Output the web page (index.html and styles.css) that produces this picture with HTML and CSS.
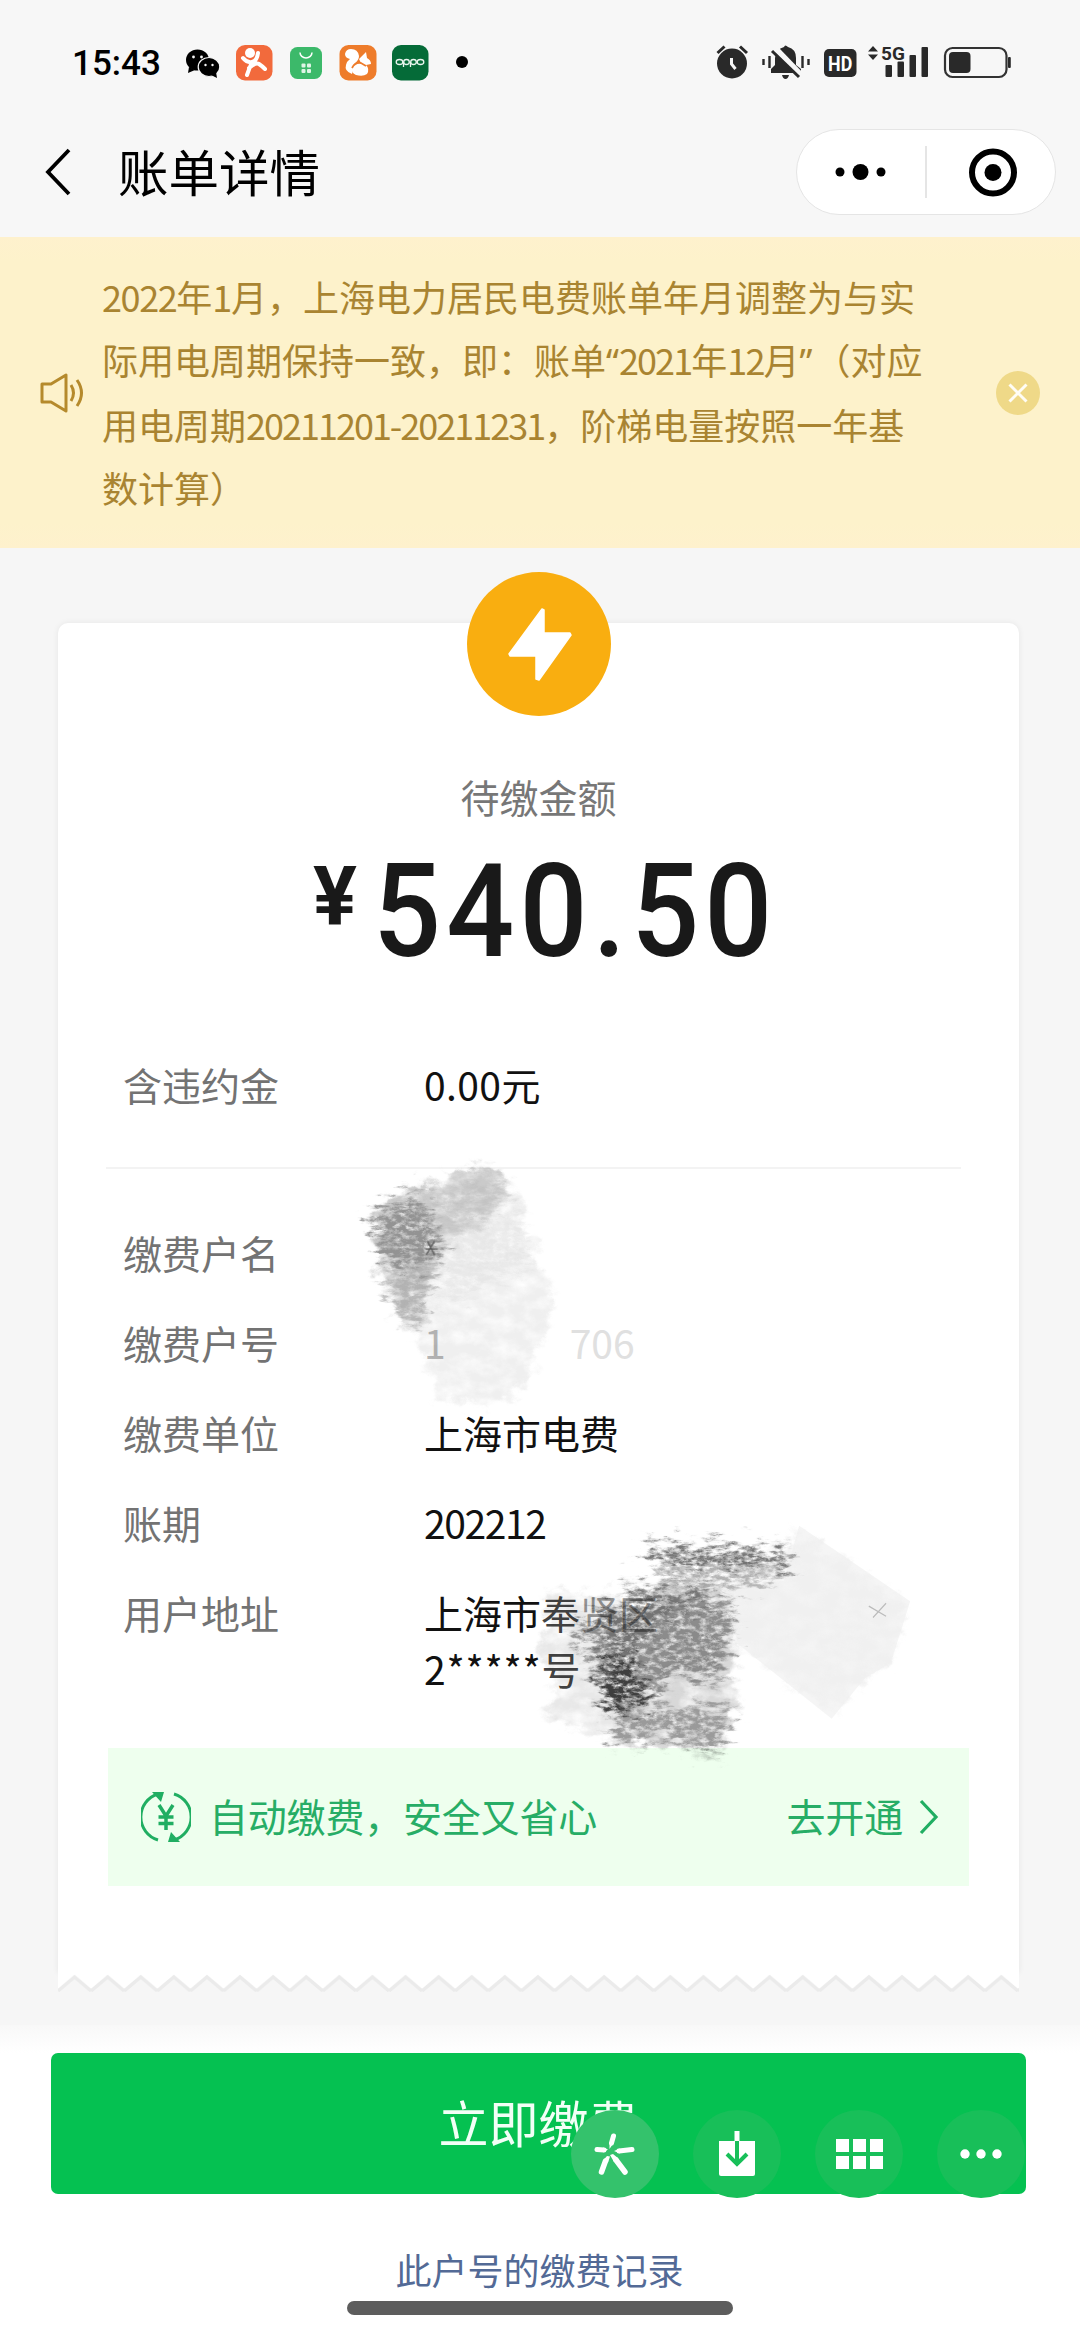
FILE: index.html
```html
<!DOCTYPE html>
<html lang="zh-CN">
<head>
<meta charset="utf-8">
<title>账单详情</title>
<link rel="stylesheet" href="styles.css">
</head>
<body>
<div class="screen">
  <header class="status">
    <span class="clock">15:43</span>
    <svg class="apps" width="300" height="40" viewBox="180 42 300 40">
      <ellipse cx="197.500" cy="60" rx="11.500" ry="10.500"/><path d="M189 67l-1 6 7-3z"/>
      <g stroke="#f7f7f7" stroke-width="1.200"><ellipse cx="209" cy="67" rx="10.800" ry="9.500"/></g><path d="M211 75l6 3-1-6z"/>
      <g fill="#f7f7f7"><circle cx="193.500" cy="57" r="1.400"/><circle cx="201.500" cy="57" r="1.400"/><circle cx="205.500" cy="65" r="1.200"/><circle cx="212.500" cy="65" r="1.200"/></g>
      <rect x="236" y="45" width="36.500" height="35.500" rx="9" fill="#f26a3c"/>
      <circle cx="250" cy="53" r="5" fill="#fff"/>
      <path d="M243 58q4 5 9 4t6-9M252 62q-3 7-5 13M249 68q7-6 10-4t6 5" fill="none" stroke="#fff" stroke-width="4" stroke-linecap="round"/>
      <rect x="290" y="47" width="32" height="32" rx="7.500" fill="#3cb96a"/>
      <path d="M300 52.500a6 5.500 0 0 0 12 0" fill="none" stroke="#fff" stroke-width="1.500"/>
      <g fill="#dff5e6"><rect x="301.500" y="63.500" width="4" height="4" rx="1"/><rect x="307" y="63.500" width="4" height="4" rx="1"/><rect x="301.500" y="69" width="4" height="4" rx="1"/><rect x="307" y="69" width="4" height="4" rx="1"/></g>
      <rect x="339.500" y="45" width="37" height="35.500" rx="9" fill="#ee7c2b"/>
      <path d="M352 74q-8-3-6-9 1-4 4-6-5-1-5-5 1-5 6-5 7 0 8 7 0 4-4 7t-2 7z" fill="#fff"/>
      <path d="M359 59l7-7 1 6q4 2 4 6l-5 1q4 4 1 9-4 3-11 1-5-2-4-7 2-6 9-5z" fill="#fff"/>
      <path d="M352 68q3-6 9-5l5 3" fill="none" stroke="#ee7c2b" stroke-width="1.800"/>
      <rect x="392" y="45" width="36.500" height="35.500" rx="9" fill="#056b38"/>
      <g fill="none" stroke="#eaf5ee" stroke-width="1.300"><ellipse cx="399.500" cy="62" rx="3.300" ry="2.500"/><ellipse cx="406.500" cy="62" rx="2.800" ry="2.500"/><ellipse cx="413.500" cy="62" rx="2.800" ry="2.500"/><ellipse cx="420.500" cy="62" rx="3.300" ry="2.500"/><path d="M403.500 62v5M410.500 62v5"/></g>
      <circle cx="462" cy="62" r="6"/>
    </svg>
    <svg class="signals" width="300" height="40" viewBox="714 42 300 40" fill="#292929">
      <circle cx="732" cy="63.500" r="15"/><path d="M717.500 53l7-6.500M747 53l-7-6.500" stroke="#292929" stroke-width="3"/>
      <path d="M731.500 58v6l4 5" fill="none" stroke="#f7f7f7" stroke-width="3"/>
      <path d="M771 73v-4l4-4v-7q1-9 9-11 1-3 4 0 8 2 8 11v7l5 4v4zM782 75h7q-1 4-3.500 4t-3.500-4"/>
      <path d="M763.500 59v6M769.500 56v12M802.500 56v12M808.500 59v6" stroke="#292929" stroke-width="2.400"/>
      <path d="M774 47l27 28" stroke="#f7f7f7" stroke-width="6"/><path d="M772 51l27 26" stroke="#292929" stroke-width="3"/>
      <rect x="824" y="49" width="32.500" height="28" rx="5"/>
      <text x="0" y="0" transform="translate(840.200 70.500) scale(.85 1)" text-anchor="middle" class="tiny-hd" fill="#fff">HD</text>
      <path d="M868 51.500l5-5.500 5 5.500zM868 54.500h10l-5 5.500z"/>
      <text x="881" y="60" class="tiny-5g">5G</text>
      <rect x="885.500" y="65" width="6.500" height="12" rx="1"/><rect x="897.500" y="61.500" width="6.500" height="15.500" rx="1"/><rect x="909.500" y="55" width="6.500" height="22" rx="1"/><rect x="921.500" y="47" width="6.500" height="30" rx="1"/>
      <rect x="945" y="48" width="61.500" height="29" rx="7.500" fill="none" stroke="#333" stroke-width="2.200"/><rect x="949" y="52" width="21.500" height="21" rx="4"/><rect x="1008" y="57" width="2.800" height="11" rx="1"/>
    </svg>
  </header>

  <nav class="nav">
    <svg width="28" height="50" viewBox="0 0 28 50"><path d="M25 3L4 25l21 22" fill="none" stroke="#000" stroke-width="3.800"/></svg>
    <h1 class="title">账单详情</h1>
    <div class="capsule">
      <svg width="257" height="84" viewBox="0 0 257 84"><circle cx="43" cy="42" r="4.500"/><circle cx="63.500" cy="42" r="8"/><circle cx="84" cy="42" r="4.500"/><path d="M129 16v52" stroke="#ddd" stroke-width="1.500"/><circle cx="196" cy="42.500" r="21" fill="none" stroke="#000" stroke-width="6"/><circle cx="196" cy="42.500" r="8.500"/></svg>
    </div>
  </nav>

  <section class="notice">
    <svg class="speaker" width="46" height="42" viewBox="0 0 46 42" fill="none" stroke="#b58a2c" stroke-width="3"><path d="M3 12h9L27 3v36L12 30H3z" stroke-linejoin="round"/><path d="M32 13q5 8 0 16M38 8q9 13 0 26"/></svg>
    <p class="notice-text"><span class="l1"><i>2022</i>年<i>1</i>月，上海电力居民电费账单年月调整为与实</span><span class="l2">际用电周期保持一致，即：账单<b>“</b><i>2021</i>年<i>12</i>月<b class="end">”</b>（对应</span><span class="l3">用电周期<i>20211201-20211231</i>，阶梯电量按照一年基</span><span>数计算）</span></p>
    <svg class="close" width="44" height="44" viewBox="0 0 44 44"><circle cx="22" cy="22" r="22" fill="#efd988"/><path d="M13.500 13.500l17 17M30.500 13.500l-17 17" stroke="#fffdf5" stroke-width="3"/></svg>
  </section>

  <main class="main">
    <article class="bill">
      <svg class="bolt" width="144" height="144" viewBox="0 0 144 144"><circle cx="72" cy="72" r="72" fill="#f9ae10"/><path d="M75 37l2 1V61h26l1 2-32 45-3-1V84H43l-1-2z" fill="#fff" stroke="#fff" stroke-width="1.500" stroke-linejoin="round"/></svg>
      <p class="due">待缴金额</p>
      <p class="amount"><span class="yen">¥</span><span class="figure">540.50</span></p>
      <dl class="row fee"><dt>含违约金</dt><dd>0.00元</dd></dl>
      <hr class="rule">
      <div class="rows">
        <dl class="row"><dt>缴费户名</dt><dd></dd></dl>
        <dl class="row"><dt>缴费户号</dt><dd class="faint"><span class="first">1</span><span>706</span></dd></dl>
        <dl class="row"><dt>缴费单位</dt><dd>上海市电费</dd></dl>
        <dl class="row"><dt>账期</dt><dd class="tight">202212</dd></dl>
        <dl class="row"><dt>用户地址</dt><dd>上海市<span class="fade1">奉</span><span class="fade2">贤区</span><br><span class="stars">2*****</span><span class="fade1">号</span></dd></dl>
      </div>
      <div class="auto">
        <svg width="50" height="54" viewBox="0 0 50 54" fill="none" stroke="#20ae62" stroke-width="3"><path d="M17 50A24 24 0 0 1 17 4M33 4a24 24 0 0 1 0 46"/><path d="M11 2h12l-3 10zM39 52H27l3-10z" fill="#20ae62" stroke="none"/><path d="M18 15l7 11 7-11M25 26v14M17.500 27h15M17.500 33.500h15" stroke-width="3.500"/></svg>
        <span class="auto-text">自动缴费，安全又省心</span>
        <span class="auto-link">去开通</span>
        <svg class="go" width="20" height="36" viewBox="0 0 20 36"><path d="M2 2l15 16L2 34" fill="none" stroke="#20ae62" stroke-width="3.200"/></svg>
      </div>
      <svg class="scribble" width="600" height="640" viewBox="0 0 1568 1568" preserveAspectRatio="none">
        <defs>
          <filter id="wash" x="-10%" y="-10%" width="120%" height="120%" color-interpolation-filters="sRGB">
            <feGaussianBlur in="SourceGraphic" stdDeviation="7" result="s"/>
            <feTurbulence type="fractalNoise" baseFrequency=".02 .03" numOctaves="5" seed="4" result="n"/>
            <feDisplacementMap in="s" in2="n" scale="80" xChannelSelector="R" yChannelSelector="G" result="d"/>
            <feColorMatrix in="n" type="matrix" values="0 0 0 0 0 0 0 0 0 0 0 0 0 0 0 0 0 1.600 0 -.02" result="m"/>
            <feComposite in="d" in2="m" operator="in"/>
          </filter>
          <filter id="chalk" x="-10%" y="-15%" width="120%" height="130%" color-interpolation-filters="sRGB">
            <feGaussianBlur in="SourceGraphic" stdDeviation="10" result="s"/>
            <feTurbulence type="fractalNoise" baseFrequency=".022 .07" numOctaves="5" seed="9" result="n"/>
            <feDisplacementMap in="s" in2="n" scale="120" xChannelSelector="R" yChannelSelector="G" result="d"/>
            <feTurbulence type="fractalNoise" baseFrequency=".05 .09" numOctaves="5" seed="21" result="g"/>
            <feColorMatrix in="g" type="matrix" values="0 0 0 0 0 0 0 0 0 0 0 0 0 0 0 0 2.600 0 0 -.5" result="m"/>
            <feComposite in="d" in2="m" operator="in"/>
          </filter>
        </defs>
        <g filter="url(#wash)">
          <path d="M85 190L350 65 440 95 460 160 530 330 560 390 500 560 440 650 250 640 235 540 190 480 110 340z" fill="#efefef"/>
          <path d="M85 190L190 120 350 65 435 95 430 160 300 250 240 340 200 460 170 450 110 350z" fill="#cacaca"/>
        </g>
        <g filter="url(#chalk)">
          <path d="M80 195L190 130 230 170 270 280 210 310 125 320z" fill="#939393"/>
          <path d="M120 340L250 300 200 450 170 440z" fill="#aaa" opacity=".75"/>
          <path d="M220 160L420 85 430 150 300 220z" fill="#bbb" opacity=".5"/>
          <path d="M280 230L460 160 490 300 400 350 270 400z" fill="#ddd" opacity=".45"/>
        </g>
        <path d="M229 248l18 34M247 248l-22 34M224 267h32" stroke="#555" stroke-width="3"/>
        <g filter="url(#wash)">
          <path d="M540 1110L740 1110 800 1480 640 1450 530 1410 570 1370 535 1260z" fill="#e8e8e8"/>
          <path d="M820 1100L1040 1080 1030 1330 1040 1390 990 1500 720 1470z" fill="#d8d8d8"/>
          <path d="M1200 965L1480 1135 1440 1280 1370 1320 1290 1405 1040 1235 990 1100z" fill="#f1f1f1"/>
        </g>
        <path d="M1200 945L1490 1130 1440 1280 1370 1320 1285 1418 1040 1235 1000 1100 1160 1080z" fill="#f0f0f0" opacity=".65"/>
        <g filter="url(#chalk)">
          <path d="M800 988L860 996 1165 1006 1170 1042 1010 1048 815 1032z" fill="#707070"/>
          <path d="M830 1050L1150 1060 1140 1082 940 1086 850 1088z" fill="#909090" opacity=".8"/>
          <path d="M745 1085L800 1105 950 1100 1020 1140 1020 1190 1000 1320 860 1310 800 1370 700 1390 660 1300 645 1230 600 1195 690 1155 760 1130z" fill="#8c8c8c"/>
          <path d="M700 1160L820 1125 950 1110 945 1140 840 1160 780 1250 720 1260z" fill="#606060" opacity=".6"/>
          <path d="M685 1270L760 1260 800 1370 730 1415 685 1380z" fill="#3e3e3e"/>
          <path d="M720 1400L1030 1390 985 1500 850 1460 710 1475z" fill="#9a9a9a"/>
          <path d="M870 1190L1000 1220 980 1310 850 1300z" fill="#888" opacity=".5"/>
        </g>
        <path d="M1382 1142l45 25M1427 1135l-34 35" stroke="#bbb" stroke-width="3"/>
      </svg>
      <svg class="teeth" width="961" height="26" viewBox="0 0 961 26"><defs><pattern id="tooth" width="33.100" height="26" patternUnits="userSpaceOnUse"><path d="M0 0V18L16.550 4 33.100 18V0z" fill="#fff"/><path d="M0 20L16.550 6 33.100 20" fill="none" stroke="#ebebeb" stroke-width="3.500"/></pattern></defs><rect width="961" height="26" fill="url(#tooth)"/></svg>
    </article>
  </main>

  <footer class="foot">
    <div class="pay"><span>立即缴费</span>
      <div class="tools">
        <svg class="strong" width="88" height="88" viewBox="0 0 88 88"><g fill="none" stroke="#fff" stroke-linecap="round"><path d="M42.500 26l-2 7" stroke-width="5"/><path d="M26 39.500l7 .5" stroke-width="5"/><path d="M48 41l13-1.500" stroke-width="5"/><path d="M45 50l9 12" stroke-width="5.500"/><path d="M34.500 51l-4 11" stroke-width="5.500"/></g><path d="M38.500 32l4 1-4 6zM32 37.500l5 2-5 3zM43 41l6-2.500v5zM39 45l3-1 5.500 4.500-4.500 3.500zM36 46l3 .5-2 6-5-2z" fill="#fff"/></svg>
        <svg width="88" height="88" viewBox="0 0 88 88"><path d="M26 31h36v33q0 2-2 2H28q-2 0-2-2z" fill="#fff"/><path d="M44 21v10" stroke="#fff" stroke-width="5"/><path d="M44 31v23M34 44l10 10 10-10" fill="none" stroke="#18bf59" stroke-width="4"/></svg>
        <svg width="88" height="88" viewBox="0 0 88 88"><path d="M21 29h13v13H21zM38 29h13v13H38zM55 29h13v13H55zM21 46h13v13H21zM38 46h13v13H38zM55 46h13v13H55z" fill="#fff"/></svg>
        <svg width="88" height="88" viewBox="0 0 88 88" fill="#fff"><circle cx="28" cy="44" r="4.700"/><circle cx="44" cy="44" r="4.700"/><circle cx="60" cy="44" r="4.700"/></svg>
      </div>
    </div>
    <a class="history">此户号的缴费记录</a>
    <div class="home"></div>
  </footer>
</div>
</body>
</html>
```
FILE: styles.css
```css
* { box-sizing: border-box; margin: 0; padding: 0; }
body { background: #f6f6f6; font-family: "Noto Sans CJK SC", sans-serif; color: #111; }
i { font-style: normal; }
b { font-weight: 400; font-family: "Noto Sans", sans-serif; }
svg { display: block; flex: none; }
.screen { width: 1080px; height: 2337px; display: flex; flex-direction: column; background: #f6f6f6; overflow: hidden; }

.status { height: 112px; padding: 43px 66px 0 72px; display: flex; align-items: flex-start; background: #f7f7f7; }
.clock { width: 108px; font: 500 35px/41px Roboto, sans-serif; color: #000; white-space: nowrap; }
.apps, .signals { margin-top: -1px; }
.signals { margin-left: auto; }
.tiny-hd { font: 700 21px Roboto, sans-serif; }
.tiny-5g { font: 700 19px Roboto, sans-serif; }

.nav { height: 125px; padding: 0 24px 6px 44px; display: flex; align-items: center; background: #f7f7f7; }
.title { margin: -3px 0 0 46px; font-size: 50.5px; font-weight: 400; line-height: 60px; color: #000; }
.capsule { margin-left: auto; width: 260px; height: 86px; border: 1.5px solid #e5e5e5; border-radius: 43px; background: #fff; }

.notice { height: 311px; padding: 28px 39px 0 39px; display: flex; background: linear-gradient(#fef1cd, #fdf2cb 8%, #fdf2cb 92%, #fef1cd); color: #a98431; }
.speaker { margin-top: 107px; }
.notice-text { margin-left: 17px; width: 840px; font-size: 36px; line-height: 62.7px; }
.notice-text span { display: block; white-space: nowrap; }
.l1 i { letter-spacing: -1.4px; }
.l2 i { letter-spacing: -1.9px; }
.l2 .end { margin-right: 20px; }
.l3 i { letter-spacing: -2px; }
.close { margin-left: 54px; margin-top: 106px; }

.main { height: 1477px; padding: 75px 61px 0 58px; background: #f6f6f6; }
.bill { position: relative; height: 1350px; padding-top: 146px; border-radius: 10px 10px 0 0; background: #fff; box-shadow: 0 0 6px rgba(0, 0, 0, .07); }
.bolt { position: absolute; left: 409px; top: -51px; }
.due { height: 54px; text-align: center; font-size: 39px; line-height: 54px; color: #777; }
.amount { height: 187px; padding: 13px 0 0 255px; display: flex; font: 500 130px/152px Roboto, sans-serif; color: #191919; }
.figure { letter-spacing: 5.7px; transform: scaleX(.92); transform-origin: left; }
.yen { margin-right: 16px; margin-top: 3px; font-size: 82px; font-weight: 700; line-height: 114px; }
.row { display: flex; padding-left: 65px; font-size: 39px; line-height: 56px; }
.row dt { width: 301px; color: #737373; }
.fee { margin-top: 46px; }
.fee dd { letter-spacing: .4px; }
.rule { margin: 55px 58px 0 48px; border: 0; border-top: 2px solid #f3f3f3; }
.rows { margin-top: 55px; height: 524px; display: flex; flex-direction: column; gap: 34px; }
.tight { letter-spacing: -1.4px; }
.stars { letter-spacing: .8px; }
.faint { display: flex; gap: 124px; color: #e0e0e0; }
.faint .first { color: #bbb; }
.fade1 { color: #444; }
.fade2 { color: #999; }
.auto { margin: 0 50px; height: 138px; padding: 0 30px 0 33px; display: flex; align-items: center; background: #eeffee; color: #27ad66; font-size: 39px; letter-spacing: -.2px; }
.auto-text { margin: -5px auto 0 18px; }
.auto-link { margin-top: -5px; }
.go { margin-left: 16px; }
.scribble { position: absolute; left: 282px; top: 517px; mix-blend-mode: multiply; }
.teeth { position: absolute; left: 0; top: 1348px; }

.foot { flex: 1; padding: 28px 54px 0 51px; display: flex; flex-direction: column; align-items: center; background: linear-gradient(#f8f8f8, #fff 28px); }
.pay { position: relative; align-self: stretch; height: 141px; border-radius: 7px; background: #05c151; color: #f2fff6; text-align: center; font-size: 50px; line-height: 136px; }
.tools { position: absolute; left: 520px; top: 57px; display: flex; gap: 34px; }
.tools svg { border-radius: 50%; background: #18bf59; }
.tools .strong { background: #34c26c; }
.history { margin: 48px 0 0 2px; font-size: 36px; line-height: 54px; color: #536a96; }
.home { margin: 5px 0 0 2px; width: 386px; height: 14px; border-radius: 7px; background: #5d5d5d; }
```
